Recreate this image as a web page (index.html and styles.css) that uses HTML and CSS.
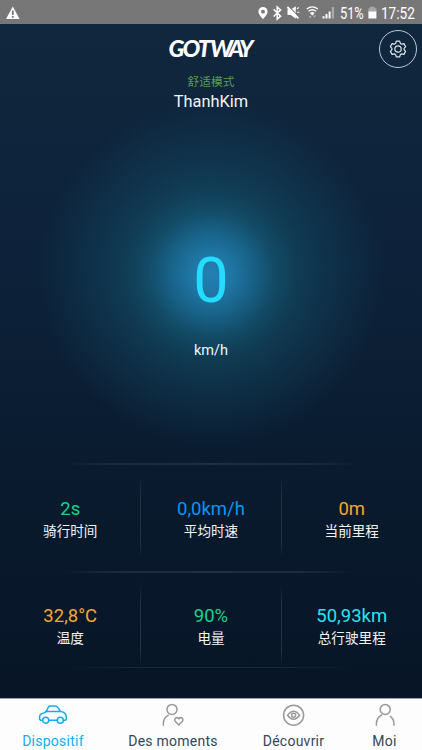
FILE: index.html
```html
<!DOCTYPE html>
<html lang="fr">
<head>
<meta charset="utf-8">
<meta name="viewport" content="width=device-width, initial-scale=1">
<title>Gotway</title>
<link rel="stylesheet" href="styles.css">
</head>
<body>
<div class="status">
  <svg class="status-icons" width="422" height="24" viewBox="0 0 422 24" aria-hidden="true">
    <path d="M12.8 6.6L19.6 19H6z" fill="#fff"/>
    <path d="M12.8 10.5v4.6M12.8 16v1.8" stroke="#777" stroke-width="1.8"/>
    <path fill="#fff" fill-rule="evenodd" d="M263 7a4.6 4.6 0 0 0-4.6 4.6c0 3 4.6 7.6 4.6 7.6s4.6-4.6 4.6-7.6A4.6 4.6 0 0 0 263 7zm0 2.8a1.9 1.9 0 1 1 0 3.8 1.9 1.9 0 0 1 0-3.8z"/>
    <path d="M273.6 9.3l7 6.8-3.4 3V6.9l3.4 3-7 6.6" fill="none" stroke="#fff" stroke-width="1.5"/>
    <path d="M287.5 9.6h3.3l5-3.4v12.6l-5-3.9h-3.3z" fill="#fff"/>
    <path d="M288.8 6.4l10.2 10.4" stroke="#777" stroke-width="1.1"/>
    <path d="M287.4 7l11 11.3" stroke="#fff" stroke-width="1.9"/>
    <path d="M297 8.7l1.8-1.2M297.2 12.2h2.1" stroke="#fff" stroke-width="1.1"/>
    <g fill="none" stroke="#fff" stroke-width="1.3"><path d="M306.8 9.1q5.5-4.6 11 0M308.5 11.3q3.8-3.1 7.6 0M310.3 13.5q2-1.6 4 0"/></g>
    <path d="M312.3 12.6l1.5 1.4-1.5 1.5-1.5-1.5z" fill="#fff"/>
    <path d="M308.6 17.4l1.6-2 1.6 2zM312.9 15.6h3.2l-1.6 2z" fill="#bbb"/>
    <path d="M322.5 16.2h2v2.2h-2zM325.5 14h2v4.4h-2zM328.6 11.4h2v7h-2z" fill="#fff"/>
    <path d="M331.8 7h2.2v11.4h-2.2z" fill="#aaa"/>
    <path d="M370 6.8h4.7v1.4h1.7v4h-8v-4h1.6z" fill="#a8a8a8"/>
    <path d="M368.4 11.5h8v7h-8z" fill="#fff"/>
  </svg>
  <span class="battery">51%</span>
  <span class="clock">17:52</span>
</div>
<main class="screen">
  <header class="header">
    <div class="logo">GOT<i>WAY</i></div>
    <button class="settings" aria-label="Paramètres">
      <svg width="18" height="18" viewBox="0 0 18 18" fill="none" stroke="#dce5ed" stroke-width="1.2" stroke-linejoin="round">
        <path d="M7.3 1.2h3.4l.7 2.2 1.3.8 2.2-.6 1.7 3-1.5 1.7v1.4l1.5 1.7-1.7 3-2.2-.6-1.3.8-.7 2.2H7.3l-.7-2.2-1.3-.8-2.2.6-1.7-3 1.5-1.7V8.3L1.4 6.6l1.7-3 2.2.6 1.3-.8z"/>
        <circle cx="9" cy="9" r="3.2"/>
      </svg>
    </button>
  </header>
  <div class="mode">舒适模式</div>
  <div class="device">ThanhKim</div>
  <section class="gauge">
    <div class="speed">0</div>
    <div class="unit">km/h</div>
  </section>
  <section class="stats">
    <div class="row">
      <div class="stat"><b class="green">2s</b><span>骑行时间</span></div>
      <div class="stat"><b class="blue">0,0km/h</b><span>平均时速</span></div>
      <div class="stat"><b class="orange">0m</b><span>当前里程</span></div>
    </div>
    <div class="row last">
      <div class="stat"><b class="orange">32,8°C</b><span>温度</span></div>
      <div class="stat"><b class="green">90%</b><span>电量</span></div>
      <div class="stat"><b class="cyan">50,93km</b><span>总行驶里程</span></div>
    </div>
    <div class="end-line"></div>
  </section>
</main>
<nav class="tabs">
  <a class="tab active">
    <svg width="30" height="24" viewBox="0 0 30 24"><path d="M4.2 17.2H3q-1.4 0-1.4-1.5v-2q0-2.3 2.3-3.1l3.5-1.2 2-3Q10.3 3.1 12 3.1h5q1.8 0 2.9 1.5l2.7 3.8q5.7.9 5.7 5.6v1.7q0 1.5-1.4 1.5h-.8M11 17.2h8M7.4 8.5h15.2"/><circle cx="7.7" cy="17.2" r="3"/><circle cx="22.3" cy="17.2" r="3"/></svg>
    <span>Dispositif</span>
  </a>
  <a class="tab">
    <svg width="24" height="24" viewBox="0 0 24 24"><circle cx="11" cy="6.4" r="5"/><path d="M2.3 22.3v-1.5q0-5.6 5-8.6"/><path d="M17.8 22l-3.6-3.8c-1.8-2.3 1.5-5 3.6-2.4 2.1-2.6 5.4.1 3.6 2.4z"/></svg>
    <span>Des moments</span>
  </a>
  <a class="tab">
    <svg width="24" height="24" viewBox="0 0 24 24"><circle cx="11.6" cy="12.2" r="10"/><path d="M5.6 12.2q6-8 12 0-6 8-12 0z"/><circle cx="11.6" cy="12.2" r="2"/></svg>
    <span>Découvrir</span>
  </a>
  <a class="tab">
    <svg width="24" height="24" viewBox="0 0 24 24"><circle cx="12.2" cy="6.4" r="5"/><path d="M3.4 22.3v-1.5q0-6 5.3-8.8M17.4 13.4q3.6 3 3.6 7.4v1.5"/></svg>
    <span>Moi</span>
  </a>
</nav>
</body>
</html>
```
FILE: styles.css
```css
* { box-sizing: border-box; }
body {
  margin: 0;
  width: 422px;
  height: 750px;
  overflow: hidden;
  display: flex;
  flex-direction: column;
  font-family: Roboto, "Noto Sans CJK SC", sans-serif;
  color: #f2f5f8;
  background: #081628;
}
.status {
  position: relative;
  flex: none;
  height: 24px;
  display: flex;
  justify-content: flex-end;
  gap: 17px;
  padding-right: 7px;
  background: #777;
  font-size: 16px;
  line-height: 27px;
  color: #fff;
}
.status-icons { position: absolute; left: 0; top: 0; }
.clock, .battery { display: block; height: 24px; transform: scaleX(.85); transform-origin: right; }
.battery { margin-right: -6px; transform: scaleX(.8); }
.screen {
  flex: 0 0 674px;
  display: flex;
  flex-direction: column;
  background:
    radial-gradient(circle 172px at 211px 250px, rgba(36,139,192,.9) 0, rgba(34,134,185,.84) 12%, rgba(28,122,165,.71) 25%, rgba(23,107,137,.56) 37%, rgba(20,94,118,.44) 50%, rgba(19,84,110,.33) 66%, rgba(18,74,100,.22) 82%, rgba(15,50,75,0) 100%),
    linear-gradient(#10273e 0, #0d223a 35%, #0a1b2f 65%, #071526 100%);
}
.header {
  flex: 0 0 50px;
  display: grid;
  grid-template-columns: 1fr 85px 1fr;
}
.logo {
  grid-column: 2;
  font: italic 900 23.5px/49px Lato, sans-serif;
  letter-spacing: -1.9px;
  color: #fff;
  white-space: nowrap;
}
.logo i { margin-left: 1px; letter-spacing: -3.2px; }
.settings {
  justify-self: end;
  width: 38px;
  height: 38px;
  margin: 6px 5px 0 0;
  padding: 0;
  display: flex;
  align-items: center;
  justify-content: center;
  border: 1px solid #bcc8d2;
  border-radius: 50%;
  background: none;
}
.mode { height: 18px; font-size: 11.7px; line-height: 16px; text-align: center; color: #5a9e48; }
.device { height: 20px; font-size: 16.4px; line-height: 20px; text-align: center; }
.gauge { flex: 0 0 351px; text-align: center; padding-top: 132px; }
.speed { font-size: 63px; line-height: 74px; font-weight: 400; color: #25dcff; }
.unit { margin-top: 24px; font-size: 14.5px; line-height: 18px; }
.row {
  height: 108px;
  display: grid;
  grid-template-columns: 140.5px 141px 140.5px;
  background: linear-gradient(90deg, transparent, #1c2d3e 20%, #1f3040 50%, #1c2d3e 80%, transparent) 64px 0 / 294px 2px no-repeat;
}
.row.last { height: 96px; }
.stat {
  display: flex;
  flex-direction: column;
  align-items: center;
  padding-top: 34px;
  background: linear-gradient(transparent, #223243 25%, #223243 80%, transparent) 100% 12px / 1px 84px no-repeat;
}
.stat:last-child { background: none; }
.row.last .stat { padding-top: 33px; }
.stat b { font-weight: 400; font-size: 18.5px; line-height: 24px; }
.stat span { font-size: 13.6px; line-height: 20px; }
.green { color: #14d58b; }
.blue { color: #0795fa; }
.orange { color: #f5a82d; }
.cyan { color: #24e4f3; }
.end-line { height: 1px; margin: 0 64px; background: linear-gradient(90deg, transparent, #162737 25%, #162737 75%, transparent); }
.tabs {
  flex: 0 0 52px;
  display: grid;
  grid-template-columns: 106px 134px 107px 75px;
  background: #fdfdfe;
  border-top: 1px solid #9aa3ad;
}
.tab { display: flex; flex-direction: column; align-items: center; padding-top: 4px; color: #34465a; }
.tab svg { fill: none; stroke: #999; stroke-width: 1.5; stroke-linecap: round; stroke-linejoin: round; }
.tab span { font-size: 14px; line-height: 20px; margin-top: 4px; letter-spacing: .25px; }
.tab.active { color: #12acf5; }
.tab.active svg { stroke: #12acf5; }
```
